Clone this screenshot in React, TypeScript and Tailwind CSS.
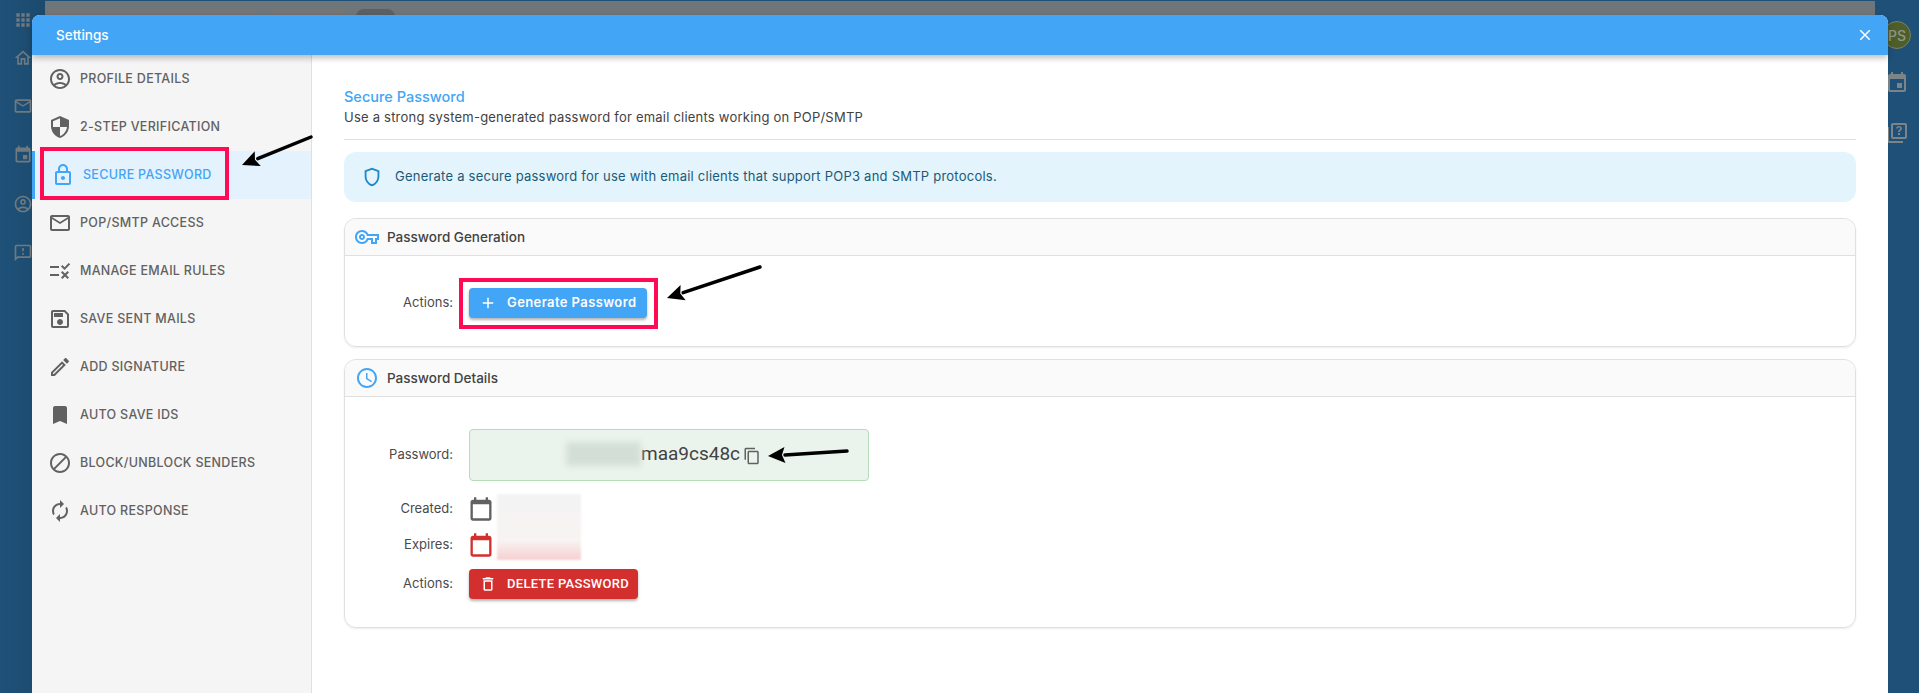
import React from 'react';

const ICONS = {
  apps: 'M4 8h4V4H4v4zm6 12h4v-4h-4v4zm-6 0h4v-4H4v4zm0-6h4v-4H4v4zm6 0h4v-4h-4v4zm6-10v4h4V4h-4zm-6 4h4V4h-4v4zm6 6h4v-4h-4v4zm0 6h4v-4h-4v4z',
  home: 'M12 5.69l5 4.5V18h-2v-6H9v6H7v-7.81l5-4.5M12 3 2 12h3v8h6v-6h2v6h6v-8h3L12 3z',
  mail: 'M20 4H4c-1.1 0-1.99.9-1.99 2L2 18c0 1.1.9 2 2 2h16c1.1 0 2-.9 2-2V6c0-1.1-.9-2-2-2zm0 14H4V8l8 5 8-5v10zm-8-7L4 6h16l-8 5z',
  event: 'M17 12h-5v5h5v-5zM16 1v2H8V1H6v2H5c-1.11 0-1.99.9-1.99 2L3 19c0 1.1.89 2 2 2h14c1.1 0 2-.9 2-2V5c0-1.1-.9-2-2-2h-1V1h-2zm3 18H5V8h14v11z',
  account: 'M12 2C6.48 2 2 6.48 2 12s4.48 10 10 10 10-4.48 10-10S17.52 2 12 2zM7.35 18.5C8.66 17.56 10.26 17 12 17s3.34.56 4.65 1.5c-1.31.94-2.91 1.5-4.65 1.5s-3.34-.56-4.65-1.5zm10.79-1.38C16.45 15.8 14.32 15 12 15s-4.45.8-6.14 2.12C4.7 15.73 4 13.95 4 12c0-4.42 3.58-8 8-8s8 3.58 8 8c0 1.95-.7 3.73-1.86 5.12zM12 6c-1.93 0-3.5 1.57-3.5 3.5S10.07 13 12 13s3.5-1.57 3.5-3.5S13.93 6 12 6zm0 5c-.83 0-1.5-.67-1.5-1.5S11.17 8 12 8s1.5.67 1.5 1.5S12.83 11 12 11z',
  feedback: 'M20 2H4c-1.1 0-1.99.9-1.99 2L2 22l4-4h14c1.1 0 2-.9 2-2V4c0-1.1-.9-2-2-2zm0 14H5.17L4 17.17V4h16v12zm-9-4h2v2h-2zm0-6h2v4h-2z',
  quiz: 'M4 6H2v14c0 1.1.9 2 2 2h14v-2H4V6zm16-4H8c-1.1 0-2 .9-2 2v12c0 1.1.9 2 2 2h12c1.1 0 2-.9 2-2V4c0-1.1-.9-2-2-2zm0 14H8V4h12v12zm-7-2h2v-2h-2v2zm0-3h2c0-1.5 2-1.6 2-3.5C17 6.1 15.700 5 14 5s-3 1.100-3 2.500h1.800c0-.5.500-.9 1.200-.9s1.200.4 1.200.9c0 1.100-2.200 1.300-2.200 3.500z',
  security: 'M12 1L3 5v6c0 5.55 3.84 10.74 9 12 5.16-1.26 9-6.45 9-12V5l-9-4zm0 10.99h7c-.53 4.12-3.28 7.79-7 8.94V12H5V6.3l7-3.11v8.8z',
  lock: 'M18 8h-1V6c0-2.76-2.24-5-5-5S7 3.24 7 6v2H6c-1.1 0-2 .9-2 2v10c0 1.1.9 2 2 2h12c1.1 0 2-.9 2-2V10c0-1.1-.9-2-2-2zM9 6c0-1.66 1.34-3 3-3s3 1.34 3 3v2H9V6zm9 14H6V10h12v10zm-6-3c1.1 0 2-.9 2-2s-.9-2-2-2-2 .9-2 2 .9 2 2 2z',
  rule: 'M16.54 11 13 7.46l1.41-1.41 2.12 2.12 4.24-4.24 1.41 1.41L16.54 11zM11 7H2v2h9V7zm10 6.41L19.59 12 17 14.59 14.41 12 13 13.41 15.59 16 13 18.59 14.41 20 17 17.41 19.59 20 21 18.59 18.41 16 21 13.41zM11 15H2v2h9v-2z',
  save: 'M17 3H5c-1.11 0-2 .9-2 2v14c0 1.1.89 2 2 2h14c1.1 0 2-.9 2-2V7l-4-4zm2 16H5V5h11.17L19 7.83V19zm-7-7c-1.66 0-3 1.34-3 3s1.34 3 3 3 3-1.34 3-3-1.34-3-3-3zM6 6h9v4H6z',
  edit: 'M3 17.25V21h3.75L17.81 9.94l-3.75-3.75L3 17.25zM5.92 19H5v-.92l9.06-9.06.92.92L5.92 19zM20.71 5.63l-2.34-2.34c-.2-.2-.45-.29-.71-.29s-.51.1-.7.29l-1.83 1.83 3.75 3.75 1.83-1.83c.39-.39.39-1.02 0-1.41z',
  bookmark: 'M17 3H7c-1.1 0-1.99.9-1.99 2L5 21l7-3 7 3V5c0-1.1-.9-2-2-2z',
  block: 'M12 2C6.48 2 2 6.48 2 12s4.48 10 10 10 10-4.48 10-10S17.52 2 12 2zM4 12c0-4.42 3.58-8 8-8 1.85 0 3.55.63 4.9 1.69L5.69 16.9C4.63 15.55 4 13.85 4 12zm8 8c-1.85 0-3.55-.63-4.9-1.69L18.31 7.1C19.37 8.45 20 10.15 20 12c0 4.42-3.58 8-8 8z',
  sync: 'M12 6v3l4-4-4-4v3c-4.42 0-8 3.58-8 8 0 1.57.46 3.03 1.24 4.26L6.7 14.8c-.45-.83-.7-1.79-.7-2.8 0-3.31 2.69-6 6-6zm6.76 1.74L17.3 9.2c.44.84.7 1.79.7 2.8 0 3.31-2.69 6-6 6v-3l-4 4 4 4v-3c4.42 0 8-3.58 8-8 0-1.57-.46-3.03-1.24-4.26z',
  shield: 'M12 2 4 5v6.09c0 5.05 3.41 9.76 8 10.91 4.59-1.15 8-5.86 8-10.91V5l-8-3zm6 9.09c0 4-2.55 7.7-6 8.83-3.45-1.13-6-4.82-6-8.83v-4.7l6-2.25 6 2.25v4.7z',
  key: 'M22 19h-6v-4h-2.68c-1.14 2.42-3.6 4-6.32 4-3.86 0-7-3.14-7-7s3.14-7 7-7c2.72 0 5.17 1.58 6.32 4H24v6h-2v4zm-4-2h2v-4h2v-2H11.94l-.23-.67C11.01 8.34 9.11 7 7 7c-2.76 0-5 2.24-5 5s2.24 5 5 5c2.11 0 4.01-1.34 4.71-3.33l.23-.67H18v4zM7 15c-1.65 0-3-1.35-3-3s1.35-3 3-3 3 1.35 3 3-1.35 3-3 3zm0-4c-.55 0-1 .45-1 1s.45 1 1 1 1-.45 1-1-.45-1-1-1z',
  clock: 'M11.99 2C6.47 2 2 6.48 2 12s4.47 10 9.99 10C17.52 22 22 17.52 22 12S17.52 2 11.99 2zM12 20c-4.42 0-8-3.58-8-8s3.58-8 8-8 8 3.58 8 8-3.58 8-8 8zm.5-13H11v6l5.25 3.15.75-1.23-4.5-2.67z',
  copy: 'M16 1H4c-1.1 0-2 .9-2 2v14h2V3h12V1zm3 4H8c-1.1 0-2 .9-2 2v14c0 1.1.9 2 2 2h11c1.1 0 2-.9 2-2V7c0-1.1-.9-2-2-2zm0 16H8V7h11v14z',
  calendar: 'M19 4h-1V2h-2v2H8V2H6v2H5c-1.1 0-2 .9-2 2v14c0 1.1.9 2 2 2h14c1.1 0 2-.9 2-2V6c0-1.1-.9-2-2-2zm0 16H5V8h14v12z',
  trash: 'M6 19c0 1.1.9 2 2 2h8c1.1 0 2-.9 2-2V7H6v12zM8 9h8v10H8V9zm7.5-5-1-1h-5l-1 1H5v2h14V4z',
  plus: 'M19 13h-6v6h-2v-6H5v-2h6V5h2v6h6v2z',
  close: 'M19 6.41 17.59 5 12 10.59 6.41 5 5 6.41 10.59 12 5 17.59 6.41 19 12 13.41 17.59 19 19 17.59 13.41 12z',
};

function Icon({ d, className }: { d: string; className?: string }) {
  return (
    <svg viewBox="0 0 24 24" fill="currentColor" className={className}>
      <path d={d} />
    </svg>
  );
}

const menuItems = [
  { icon: ICONS.account, label: 'PROFILE DETAILS' },
  { icon: ICONS.security, label: '2-STEP VERIFICATION' },
  { icon: ICONS.lock, label: 'SECURE PASSWORD', active: true },
  { icon: ICONS.mail, label: 'POP/SMTP ACCESS' },
  { icon: ICONS.rule, label: 'MANAGE EMAIL RULES' },
  { icon: ICONS.save, label: 'SAVE SENT MAILS' },
  { icon: ICONS.edit, label: 'ADD SIGNATURE' },
  { icon: ICONS.bookmark, label: 'AUTO SAVE IDS' },
  { icon: ICONS.block, label: 'BLOCK/UNBLOCK SENDERS' },
  { icon: ICONS.sync, label: 'AUTO RESPONSE' },
];

function Arrow({ x1, y1, x2, y2 }: { x1: number; y1: number; x2: number; y2: number }) {
  // head drawn at x2,y2, pointing away from x1,y1
  const a = Math.atan2(y2 - y1, x2 - x1);
  const back = 17;
  const wing = 8;
  const bx = x2 - Math.cos(a) * back;
  const by = y2 - Math.sin(a) * back;
  const head = [
    `${x2},${y2}`,
    `${bx - Math.sin(a) * wing},${by + Math.cos(a) * wing}`,
    `${bx + Math.cos(a) * 3},${by + Math.sin(a) * 3}`,
    `${bx + Math.sin(a) * wing},${by - Math.cos(a) * wing}`,
  ].join(' ');
  return (
    <g>
      <line x1={x1} y1={y1} x2={bx} y2={by} stroke="#000" strokeWidth="3.5" strokeLinecap="round" />
      <polygon points={head} fill="#000" />
    </g>
  );
}

function CardHeader({ icon, title, iconClass }: { icon: string; title: string; iconClass: string }) {
  return (
    <div className="flex h-[37px] items-center gap-2 rounded-t-[12px] border-b border-[#e0e0e0] bg-[#fafafa] pl-[10px]">
      <Icon d={icon} className={iconClass} />
      <span className="text-[13.5px] font-[450] text-[#424242]">{title}</span>
    </div>
  );
}

function Label({ children }: { children: React.ReactNode }) {
  return <div className="w-[108px] text-right text-[13px] text-[#4a4a4a]">{children}</div>;
}

export default function App() {
  return (
    <div className="relative h-screen w-full overflow-hidden bg-[#1f5078] font-['Inter',sans-serif]">
      {/* dimmed app behind the dialog */}
      <div className="flex h-full">
        <div className="flex w-[45px] flex-col items-center bg-gradient-to-r from-[#1f5179] to-[#1c4a6d] pt-[10px] text-[#6f7a80]">
          <Icon d={ICONS.apps} className="h-[20px] w-[20px]" />
          <Icon d={ICONS.home} className="mt-[18px] h-[20px] w-[20px]" />
          <Icon d={ICONS.mail} className="mt-[28px] h-[20px] w-[20px]" />
          <Icon d={ICONS.event} className="mt-[29px] h-[20px] w-[20px]" />
          <Icon d={ICONS.account} className="mt-[29px] h-[20px] w-[20px]" />
          <Icon d={ICONS.feedback} className="mt-[29px] h-[20px] w-[20px]" />
        </div>
        <div className="flex-1">
          <div className="mt-px flex h-[20px] gap-2 bg-[#6e7679] pl-[1px]">
            <div className="mt-2 h-6 w-[214px] rounded-lg bg-[#757575]" />
            <div className="mt-2 h-6 w-[78px] rounded-lg bg-[#757575]" />
            <div className="ml-[2px] mt-2 h-6 w-[39px] rounded-lg bg-[#5a6063]" />
          </div>
        </div>
        <div className="flex w-[44px] flex-col items-center bg-[#1f5078] pt-[21px] text-[#7c8488]">
          <div className="flex h-[28px] w-[28px] shrink-0 items-center justify-center rounded-full border border-[#7a8260] bg-[#4e5e2a] text-[14px] font-medium text-[#8f9688]">
            PS
          </div>
          <Icon d={ICONS.event} className="mt-[22px] h-[24px] w-[24px]" />
          <Icon d={ICONS.quiz} className="mt-[26px] h-[24px] w-[24px]" />
        </div>
      </div>

      {/* dialog */}
      <div className="absolute bottom-0 left-[32px] right-[31px] top-[15px] flex flex-col rounded-t-[8px] bg-white">
        <div className="z-10 flex h-[40px] items-center justify-between rounded-t-[8px] bg-[#42a5f5] pl-[24px] pr-[14px] text-white shadow-[0_3px_6px_rgba(0,0,0,0.25)]">
          <span className="text-[13.5px] font-medium">Settings</span>
          <Icon d={ICONS.close} className="h-[18px] w-[18px]" />
        </div>
        <div className="flex min-h-0 flex-1">
          <div className="w-[280px] shrink-0 border-r border-[#e0e0e0] bg-[#f5f5f5]">
            {menuItems.map((item) => (
              <div
                key={item.label}
                className={
                  item.active
                    ? 'flex h-[48px] items-center gap-[8px] border-l-[3px] border-[#42a5f5] bg-[#e3f2fd] pl-[16px] font-medium text-[#42a5f5]'
                    : 'flex h-[48px] items-center gap-[8px] pl-[16px] font-[450] text-[#616161]'
                }
              >
                <Icon d={item.icon} className="h-[24px] w-[24px] shrink-0" />
                <span className="text-[12.5px] tracking-[0.3px]">{item.label}</span>
              </div>
            ))}
          </div>

          <div className="flex-1 px-[32px] pt-[32px]">
            <div className="text-[14.5px] font-medium leading-[20px] text-[#42a5f5]">Secure Password</div>
            <div className="text-[13px] leading-[20px] tracking-[0.22px] text-[#424242]">
              Use a strong system-generated password for email clients working on POP/SMTP
            </div>
            <div className="mt-[12px] border-t border-[#e0e0e0]" />

            <div className="mt-[12px] flex h-[50px] items-center gap-[12px] rounded-[12px] bg-[#e3f4fc] pl-[17px] text-[13px] tracking-[0.23px] text-[#1a5a78]">
              <Icon d={ICONS.shield} className="h-[22px] w-[22px] text-[#1e88c7]" />
              <span>Generate a secure password for use with email clients that support POP3 and SMTP protocols.</span>
            </div>

            <div className="mt-[16px] rounded-[12px] border border-[#e0e0e0] shadow-[0_1px_2px_rgba(0,0,0,0.08)]">
              <CardHeader icon={ICONS.key} title="Password Generation" iconClass="h-[24px] w-[24px] text-[#42a5f5]" />
              <div className="flex h-[90px] items-center pt-[4px]">
                <Label>Actions:</Label>
                <div className="ml-[16px] flex h-[30px] w-[178px] items-center rounded-[4px] bg-[#42a5f5] pl-[10px] text-[13px] font-semibold tracking-[0.4px] text-white shadow-[0_2px_3px_rgba(0,0,0,0.3)]">
                  <Icon d={ICONS.plus} className="h-[18px] w-[18px]" />
                  <span className="ml-[10px]">Generate Password</span>
                </div>
              </div>
            </div>

            <div className="mt-[12px] rounded-[12px] border border-[#e0e0e0] shadow-[0_1px_2px_rgba(0,0,0,0.08)]">
              <CardHeader icon={ICONS.clock} title="Password Details" iconClass="h-[24px] w-[24px] text-[#42a5f5]" />
              <div className="pb-[28px] pt-[32px]">
                <div className="flex items-center">
                  <Label>Password:</Label>
                  <div className="ml-[16px] flex h-[52px] w-[400px] items-center rounded-[4px] border border-[#b7dcb9] bg-[#ebf4ec] pb-[2px] pl-[96px] font-['Roboto',sans-serif] text-[19px] text-[#424242]">
                    <div className="h-[24px] w-[75px] bg-[#d3dfd6] blur-[3px]" />
                    <span>maa9cs48c</span>
                    <Icon d={ICONS.copy} className="ml-[3px] mt-[4px] h-[18px] w-[18px] text-[#616161]" />
                  </div>
                </div>
                <div className="relative mt-[14px] flex items-center">
                  <Label>Created:</Label>
                  <Icon d={ICONS.calendar} className="ml-[14px] h-[28px] w-[28px] text-[#616161]" />
                  <div className="absolute left-[152px] top-[-1px] h-[66px] w-[84px] bg-gradient-to-b from-[#f3f3f3] from-10% via-[#f9f3f3] via-70% to-[#f5d0d0] blur-[1px]" />
                </div>
                <div className="mt-[8px] flex items-center">
                  <Label>Expires:</Label>
                  <Icon d={ICONS.calendar} className="ml-[14px] h-[28px] w-[28px] text-[#d32f2f]" />
                </div>
                <div className="mt-[10px] flex items-center">
                  <Label>Actions:</Label>
                  <div className="ml-[16px] flex h-[30px] w-[169px] items-center rounded-[4px] bg-[#d32f2f] pl-[10px] font-['Roboto',sans-serif] text-[13px] font-medium tracking-[0.3px] text-white shadow-[0_2px_3px_rgba(0,0,0,0.3)]">
                    <Icon d={ICONS.trash} className="h-[18px] w-[18px]" />
                    <span className="ml-[10px]">DELETE PASSWORD</span>
                  </div>
                </div>
              </div>
            </div>
          </div>
        </div>
      </div>

      {/* annotations drawn on top of the screenshot */}
      <div className="absolute left-[40px] top-[147px] h-[53px] w-[189px] border-[4px] border-[#ff0a54]" />
      <div className="absolute left-[459px] top-[278px] h-[51px] w-[199px] border-[4px] border-[#ff0a54]" />
      <svg className="absolute left-0 top-0 h-full w-full" fill="none">
        <Arrow x1={311} y1={137} x2={242} y2={165} />
        <Arrow x1={760} y1={267} x2={667} y2={298} />
        <Arrow x1={847} y1={451} x2={768} y2={456} />
      </svg>
    </div>
  );
}
